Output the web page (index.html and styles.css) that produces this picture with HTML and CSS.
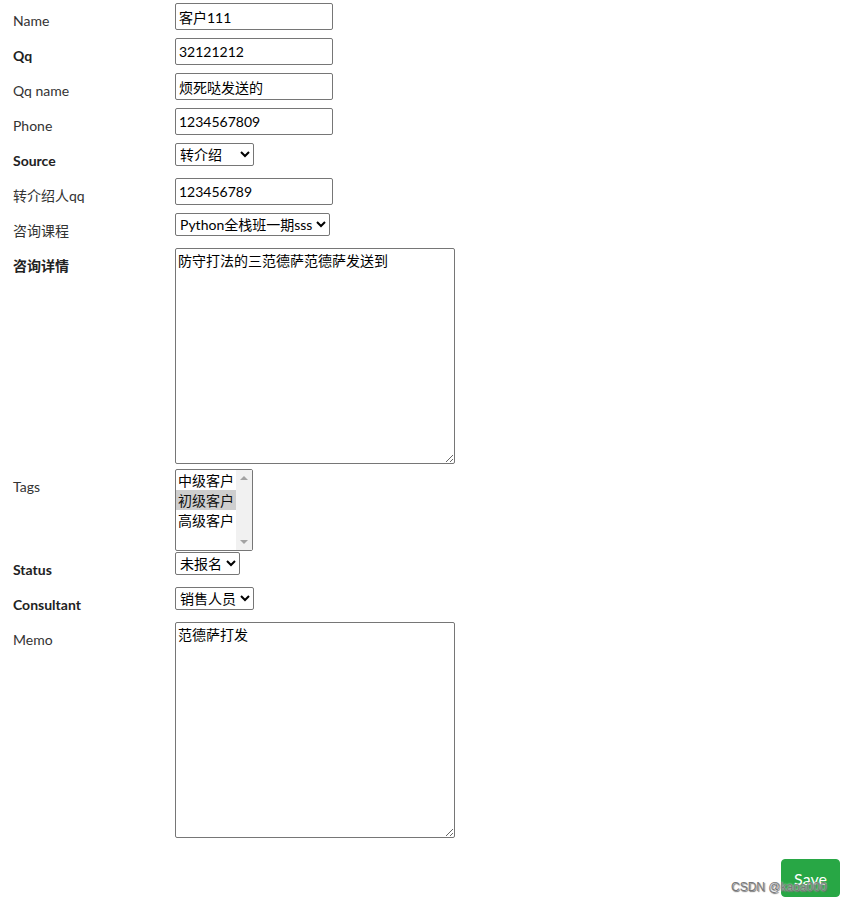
FILE: index.html
```html
<!DOCTYPE html>
<html lang="zh-CN">
<head>
    <meta charset="UTF-8">
    <title>客户编辑</title>
    <link rel="stylesheet" href="styles.css">
</head>
<body>
    <form class="edit-form">
        <div class="form-row">
            <label class="field-label">Name</label>
            <input class="text-input" type="text" value="客户111">
        </div>
        <div class="form-row">
            <label class="field-label required">Qq</label>
            <input class="text-input" type="text" value="32121212">
        </div>
        <div class="form-row">
            <label class="field-label">Qq name</label>
            <input class="text-input" type="text" value="烦死哒发送的">
        </div>
        <div class="form-row">
            <label class="field-label">Phone</label>
            <input class="text-input" type="text" value="1234567809">
        </div>
        <div class="form-row">
            <label class="field-label required">Source</label>
            <select class="drop source-select">
                <option>转介绍</option>
                <option>QQ群</option>
                <option>百度推广</option>
            </select>
        </div>
        <div class="form-row">
            <label class="field-label">转介绍人qq</label>
            <input class="text-input" type="text" value="123456789">
        </div>
        <div class="form-row">
            <label class="field-label">咨询课程</label>
            <select class="drop course-select">
                <option>Python全栈班一期sss</option>
            </select>
        </div>
        <div class="form-row">
            <label class="field-label required">咨询详情</label>
            <textarea class="big-text">防守打法的三范德萨范德萨发送到</textarea>
        </div>
        <div class="form-row">
            <label class="field-label">Tags</label>
            <div class="tag-box">
                <select class="tag-list" multiple size="4">
                    <option>中级客户</option>
                    <option selected>初级客户</option>
                    <option>高级客户</option>
                </select>
                <!-- 滚动条（禁用状态） -->
                <div class="fake-scroll">
                    <span class="arrow-up"></span>
                    <span class="arrow-down"></span>
                </div>
            </div>
        </div>
        <div class="form-row">
            <label class="field-label required">Status</label>
            <select class="drop status-select">
                <option>未报名</option>
                <option>已报名</option>
            </select>
        </div>
        <div class="form-row">
            <label class="field-label required">Consultant</label>
            <select class="drop consultant-select">
                <option>销售人员</option>
            </select>
        </div>
        <div class="form-row">
            <label class="field-label">Memo</label>
            <textarea class="big-text">范德萨打发</textarea>
        </div>
        <div class="form-actions">
            <button class="btn-save" type="button">Save</button>
        </div>
    </form>
    <div class="watermark">CSDN @kaoa000</div>
</body>
</html>
```

FILE: styles.css
```css
* {
    box-sizing: border-box;
}

body {
    margin: 0;
    padding: 3px 6px 0 13px;
    font-family: Lato, "Noto Sans CJK SC", sans-serif;
    font-size: 14px;
    color: #333;
    background: #fff;
    position: relative;
    min-height: 903px;
}

.form-row {
    display: flex;
    align-items: flex-start;
}

.field-label {
    width: 162px;
    flex-shrink: 0;
    padding-top: 8px;
    line-height: 20px;
}

.required {
    font-weight: bold;
    color: #222;
}

/* 输入框 */
.text-input,
.drop,
.big-text,
.tag-list {
    font-family: Lato, "Noto Sans CJK SC", sans-serif;
    font-size: 14px;
    color: #000;
    border: 1px solid #767676;
    border-radius: 2px;
    background: #fff;
    margin: 0;
}

.text-input {
    width: 158px;
    height: 27px;
    padding: 1px 3px;
    margin-bottom: 8px;
}

.drop {
    height: 23px;
    padding: 0;
    margin-bottom: 12px;
}

.source-select { width: 79px; }
.course-select { width: 155px; }
.status-select { width: 65px; }
.consultant-select { width: 79px; }

.big-text {
    width: 280px;
    height: 216px;
    padding: 2px 2px;
    line-height: 20px;
    resize: both;
    margin-bottom: 5px;
}

.tag-box {
    position: relative;
    width: 78px;
    height: 82px;
    margin-bottom: 1px;
}

.tag-list {
    width: 78px;
    height: 82px;
    padding: 0;
    overflow: hidden;
}

.tag-list option {
    padding: 0 2px;
    line-height: 20px;
    width: 60px;
}

.tag-list option:checked {
    background: #cecece;
}

.fake-scroll {
    position: absolute;
    top: 1px;
    right: 1px;
    bottom: 1px;
    width: 16px;
    background: #f1f1f1;
}

.arrow-up,
.arrow-down {
    position: absolute;
    left: 4px;
    width: 0;
    height: 0;
    border-left: 4px solid transparent;
    border-right: 4px solid transparent;
}

.arrow-up {
    top: 6px;
    border-bottom: 4px solid #a3a3a3;
}

.arrow-down {
    bottom: 6px;
    border-top: 4px solid #a3a3a3;
}

.form-actions {
    display: flex;
    justify-content: flex-end;
    padding-top: 16px;
}

.btn-save {
    font-family: Lato, sans-serif;
    font-size: 16px;
    color: #fff;
    background: #28a745;
    border: 1px solid #28a745;
    border-radius: 4px;
    width: 59px;
    height: 38px;
    padding: 6px 12px;
}

.watermark {
    position: absolute;
    left: 731px;
    top: 880px;
    font-family: "Liberation Sans", sans-serif;
    font-size: 12px;
    color: #777;
    text-shadow: 0 0 2px #fff, 1px 1px 1px #555;
}
```
